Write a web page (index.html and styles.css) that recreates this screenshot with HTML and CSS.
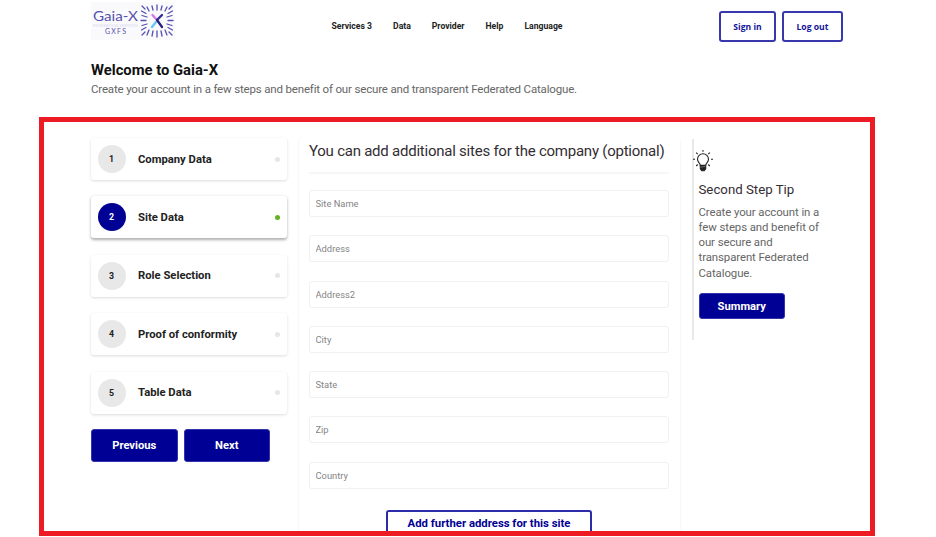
FILE: index.html
```html
<!DOCTYPE html>
<html lang="en">
<head>
<meta charset="utf-8">
<title>Gaia-X</title>
<link rel="stylesheet" href="styles.css">
</head>
<body>
<header class="header">
  <svg class="logo" width="84" height="38" viewBox="0 0 84 38" role="img" aria-label="Gaia-X GXFS">
    <rect width="84" height="38" fill="#fafafd"/>
    <text class="logo-name" x="2" y="18.500" textLength="45" lengthAdjust="spacingAndGlyphs">Gaia-X</text>
    <text class="logo-small" x="2" y="24.800" textLength="45" lengthAdjust="spacingAndGlyphs">FEDERATION SERVICES</text>
    <text class="logo-sub" x="14" y="31.500" textLength="21">GXFS</text>
    <g fill="none" stroke="#5550b4" stroke-width="1.3" stroke-linecap="round">
      <path d="M66 8V3M66 29v6M55 18.5h-5M77 18.5h5"/>
      <path d="M62 8l-1-4M70 8l1-4M62 29l-1 5M70 29l1 5M56 15l-5-1.5M76 15l5-1.5M56 22l-5 1.5M76 22l5 1.5"/>
      <path d="M58 9l-2-4M74 9l2-4M58 28l-2 5M74 28l2 5M55 11.5l-4.500-2.500M77 11.500l4.500-2.500M55 25.500l-4.500 2.500M77 25.500l4.500 2.500"/>
      <path d="M54 7l-3-3M78 7l3-3M54 30l-3 3M78 30l3 3"/>
    </g>
    <g fill="none" stroke-width="2.3" stroke-linecap="round">
      <path d="M61.5 13l4 4.500" stroke="#d878ee"/>
      <path d="M71 13l-4 4" stroke="#302a91"/>
      <path d="M65 20l-4 5" stroke="#62c9f3"/>
      <path d="M66 18l5 7" stroke="#28217d"/>
    </g>
  </svg>
  <nav class="nav">
    <a>Services 3</a><a>Data</a><a>Provider</a><a>Help</a><a>Language</a>
  </nav>
  <div class="account">
    <button class="btn-account">Sign in</button>
    <button class="btn-account btn-logout">Log out</button>
  </div>
</header>

<section class="intro">
  <h1>Welcome to Gaia-X</h1>
  <p>Create your account in a few steps and benefit of our secure and transparent Federated Catalogue.</p>
</section>

<main class="frame">
  <div class="steps">
    <div class="step"><span class="num">1</span><span class="label">Company Data</span><i class="dot"></i></div>
    <div class="step active"><span class="num">2</span><span class="label">Site Data</span><i class="dot"></i></div>
    <div class="step"><span class="num">3</span><span class="label">Role Selection</span><i class="dot"></i></div>
    <div class="step"><span class="num">4</span><span class="label">Proof of conformity</span><i class="dot"></i></div>
    <div class="step"><span class="num">5</span><span class="label">Table Data</span><i class="dot"></i></div>
    <div class="step-actions">
      <button class="btn">Previous</button>
      <button class="btn">Next</button>
    </div>
  </div>

  <form class="panel">
    <h2>You can add additional sites for the company (optional)</h2>
    <input placeholder="Site Name">
    <input placeholder="Address">
    <input placeholder="Address2">
    <input placeholder="City">
    <input placeholder="State">
    <input placeholder="Zip">
    <input placeholder="Country">
    <button class="btn-outline" type="button">Add further address for this site</button>
  </form>

  <aside class="tip">
    <svg class="bulb" width="20" height="22" viewBox="0 0 20 22" fill="none" stroke="#222" stroke-width="1.1">
      <path d="M7.300 15.300c0-2.300-2.800-2.900-2.800-6a5.500 5.500 0 0 1 11 0c0 3.100-2.800 3.700-2.800 6z"/>
      <path d="M7.300 15.500h5.400v3.300l-1.500 2H8.800l-1.500-2z" fill="#222"/>
      <path d="M7.500 17.200l5-.8" stroke="#999" stroke-width=".6"/>
      <path d="M10 0v1.800M3.200 2.700l1.500 1.500M16.800 2.700l-1.500 1.500M0 9.300h2M18 9.300h2M3.200 16l1.500-1.500M16.800 16l-1.500-1.500"/>
    </svg>
    <h3>Second Step Tip</h3>
    <p>Create your account in a<br>few steps and benefit of<br>our secure and<br>transparent Federated<br>Catalogue.</p>
    <button class="btn btn-summary">Summary</button>
  </aside>
</main>
</body>
</html>
```
FILE: styles.css
```css
* { box-sizing: border-box; }

body {
  margin: 0;
  width: 936px;
  height: 537px;
  overflow: hidden;
  background: #fff;
  color: #222;
  font-family: Roboto, "Liberation Sans", sans-serif;
}

h1, h2, h3, p { margin: 0; font-weight: 400; }
button { padding: 0; font-family: inherit; font-weight: 700; }

.header {
  display: flex;
  align-items: flex-start;
  height: 61px;
  padding-left: 91px;
}
.logo { margin-top: 2px; }
.logo-name { font: 400 14px Lato, sans-serif; fill: #5750ac; }
.logo-small { font: 4px Lato, sans-serif; fill: #d9d8ee; }
.logo-sub { font: 7px Lato, sans-serif; fill: #5750ac; }

.nav {
  display: flex;
  gap: 21px;
  width: 387px;
  margin: 20px 0 0 156.5px;
  font-size: 8.65px;
  line-height: 12px;
  font-weight: 700;
  white-space: nowrap;
}

.account { display: flex; gap: 6px; margin: 11px 0 0 .5px; }
.btn-account {
  width: 57px;
  height: 31px;
  border: 2px solid #3838ac;
  border-radius: 3px;
  background: #fff;
  color: #14149c;
  font-family: "Open Sans", sans-serif;
  font-size: 8.6px;
}
.btn-logout { width: 61px; }

.intro { height: 56px; padding-left: 91px; }
.intro h1 { color: #111; font-size: 14.8px; line-height: 19px; font-weight: 700; }
.intro p { padding-top: 1px; color: #666; font-size: 11.5px; line-height: 17px; letter-spacing: -.168px; }

.frame {
  display: flex;
  align-items: flex-start;
  width: 836px;
  height: 419px;
  margin-left: 39px;
  padding: 16px 0 0 47px;
  border: 5px solid #ed1c24;
  overflow: hidden;
}

.steps { width: 195.5px; }
.step {
  display: flex;
  align-items: center;
  height: 42px;
  margin-bottom: 16.4px;
  padding: 0 7px 0 6.5px;
  border-radius: 3px;
  box-shadow: 0 1px 3px rgba(0, 0, 0, .14);
}
.step.active { box-shadow: 0 1.5px 3px rgba(0, 0, 0, .32); }
.num {
  width: 28px;
  height: 28px;
  border-radius: 50%;
  background: #e8e8e8;
  font-size: 8.8px;
  line-height: 28px;
  font-weight: 700;
  text-align: center;
}
.active .num { background: #000094; color: #fff; }
.label { flex: 1; padding-left: 12.5px; font-size: 11.25px; font-weight: 700; }
.dot { width: 5px; height: 5px; border-radius: 50%; background: #e6e6e6; }
.active .dot { background: #63b320; }

.step-actions { display: flex; gap: 6px; margin-top: -1px; }
.btn {
  width: 86.5px;
  height: 33px;
  border: 1px solid #3333aa;
  border-radius: 3px;
  background: #000094;
  color: #fff;
  font-size: 11.2px;
}

.panel {
  display: flex;
  flex-direction: column;
  flex-shrink: 0;
  width: 381px;
  height: 440px;
  margin-left: 12.5px;
  padding: 0 11px 0 10px;
  border-radius: 3px;
  box-shadow: 0 1px 3px rgba(0, 0, 0, .08);
}
.panel h2 {
  height: 36px;
  margin-bottom: 16px;
  border-bottom: 2px solid #f6f6f6;
  color: #332e33;
  font-size: 15px;
  line-height: 27px;
  letter-spacing: -.237px;
  white-space: nowrap;
}
.panel input {
  flex: none;
  width: 100%;
  height: 27px;
  margin: 0 0 18.3px;
  padding: 0 5.5px;
  border: 1px solid #f1f1f1;
  border-radius: 3px;
  font: 9.35px Roboto, sans-serif;
}
.panel input::placeholder { color: #858585; opacity: 1; }
.btn-outline {
  align-self: center;
  flex: none;
  width: 206px;
  height: 26px;
  margin-top: 3px;
  padding-bottom: 2px;
  border: 2px solid #2c2ca8;
  border-bottom: 0;
  border-radius: 3px 3px 0 0;
  background: #fff;
  color: #000094;
  font-size: 11.35px;
}

.tip {
  width: 150px;
  height: 201px;
  margin: 1px 0 0 12px;
  padding: 11px 0 0 4.5px;
  border-left: 2px solid #e8e8e8;
}
.bulb { display: block; margin-left: -5.5px; }
.tip h3 { margin-top: 7.5px; color: #332e33; font-size: 13.25px; line-height: 20px; }
.tip p { margin-top: 5.5px; color: #666; font-size: 11.4px; line-height: 15.15px; letter-spacing: -.08px; }
.btn-summary { display: block; height: 26px; margin-top: 12px; padding-top: 1px; }
```
